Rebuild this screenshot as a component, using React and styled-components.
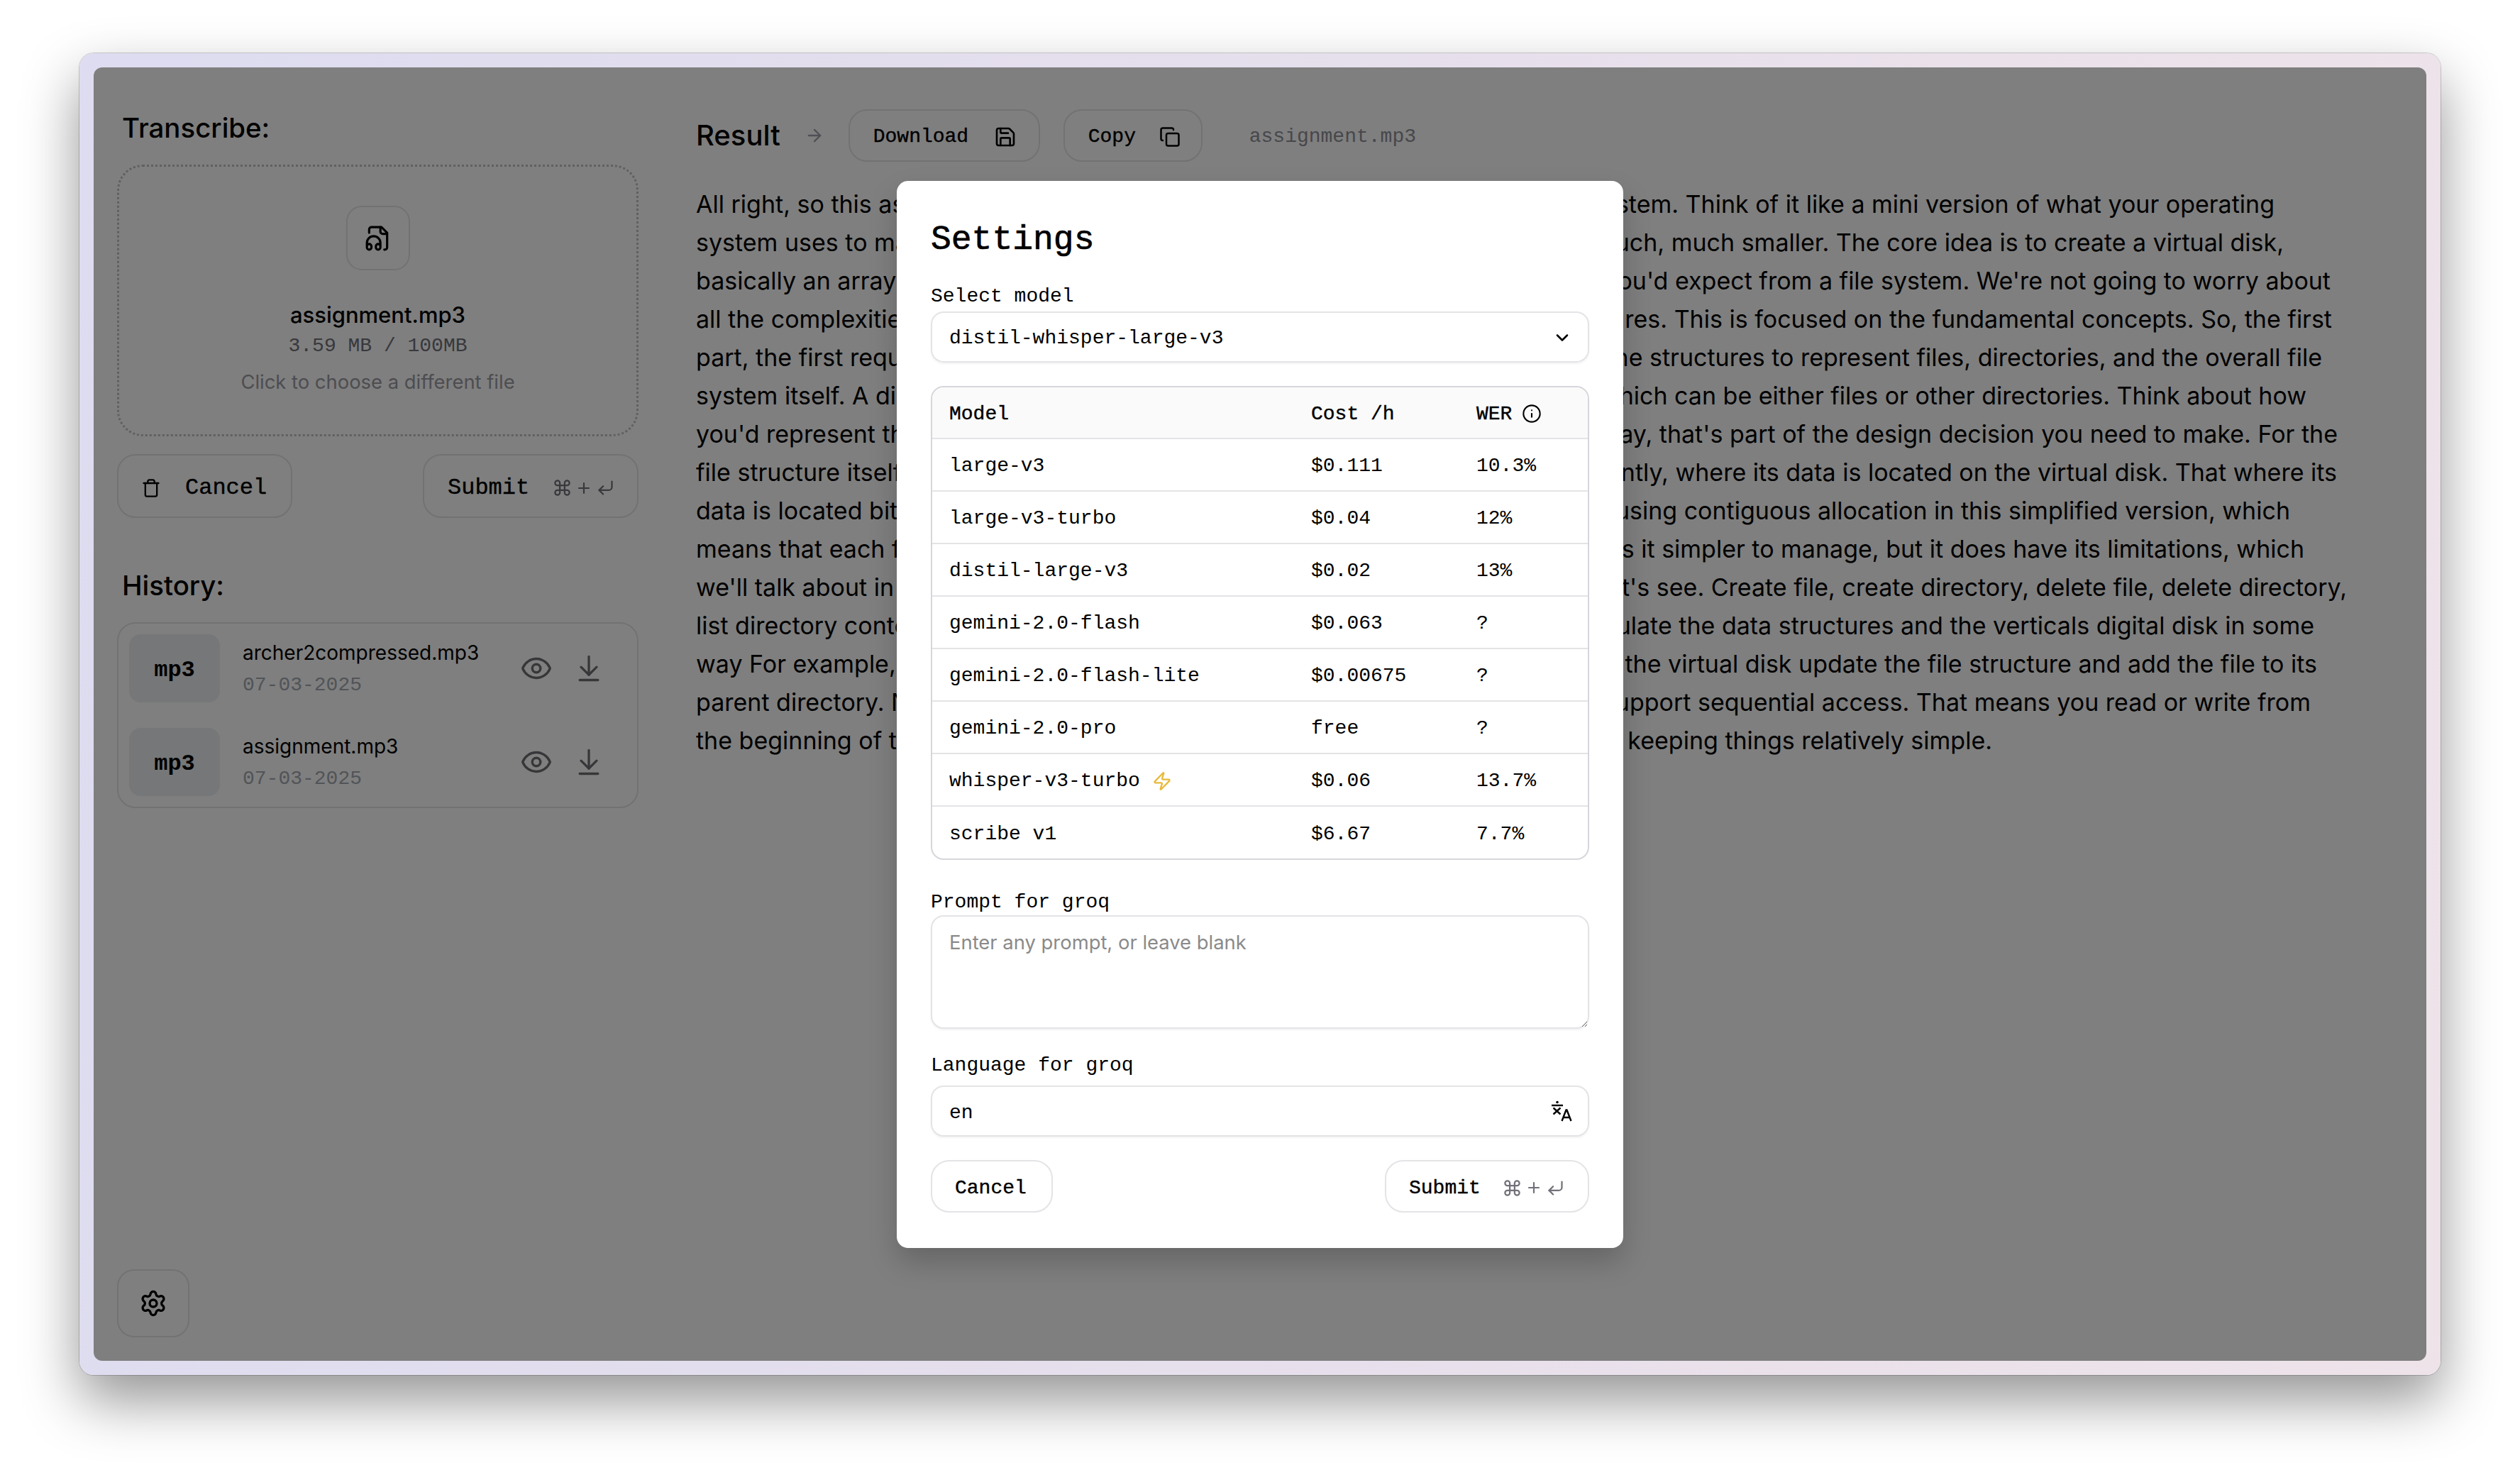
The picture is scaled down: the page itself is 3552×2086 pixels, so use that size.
import React from "react";
import styled, { createGlobalStyle } from "styled-components";
import {
  ArrowDownToLine,
  ArrowRight,
  ChevronDown,
  Command,
  Copy,
  CornerDownLeft,
  Eye,
  Info,
  Plus,
  Save,
  Settings as SettingsIcon,
  Trash,
  Zap,
} from "lucide-react";

const SANS = `Inter, "Liberation Sans", sans-serif`;
const MONO = `"Liberation Mono", "DejaVu Sans Mono", monospace`;

const GlobalStyle = createGlobalStyle`
  html, body {
    margin: 0;
    background: #fff;
  }
  * {
    box-sizing: border-box;
  }
`;

const Page = styled.div`
  width: 3552px;
  height: 2086px;
  padding: 75px 112px 148px;
  overflow: hidden;
  background: #fff;
`;

const Frame = styled.div`
  height: 100%;
  padding: 20px;
  border-radius: 20px;
  background: linear-gradient(98deg, #dddcf0 0%, #e6dfec 50%, #eee3e9 100%);
  box-shadow: 0 0 0 1px rgba(0, 0, 0, 0.18), 0 36px 80px rgba(0, 0, 0, 0.42);
`;

const Shell = styled.div`
  position: relative;
  display: flex;
  height: 100%;
  overflow: hidden;
  border-radius: 12px;
  background: #fff;
  color: #000;
  font-family: ${SANS};
`;

const Sidebar = styled.aside`
  display: flex;
  flex-direction: column;
  flex: none;
  width: 800px;
  padding: 61px 32px 33px 33px;
`;

const Heading = styled.h2`
  margin: ${(p) => p.$margin || "0"};
  font-size: 38.4px;
  line-height: 48px;
  font-weight: 500;
`;

const DropZone = styled.div`
  display: flex;
  flex-direction: column;
  align-items: center;
  height: 383px;
  margin-top: 28px;
  padding-top: 55px;
  border: 3px dotted #c0c0c6;
  border-radius: 36px;
`;

const FileIconBox = styled.div`
  display: flex;
  align-items: center;
  justify-content: center;
  width: 90px;
  height: 91px;
  border: 2px solid #e4e4e7;
  border-radius: 22px;
`;

const FileName = styled.div`
  margin-top: 43px;
  font-size: 31px;
  line-height: 40px;
  font-weight: 500;
`;

const FileSize = styled.div`
  margin-top: 6px;
  color: #71717a;
  font-family: ${MONO};
  font-size: 28px;
  line-height: 36px;
`;

const Hint = styled.div`
  margin-top: 14px;
  color: #9a9aa2;
  font-size: 27.4px;
  line-height: 36px;
`;

const Actions = styled.div`
  display: flex;
  justify-content: space-between;
  margin-top: 25px;
`;

const Button = styled.div`
  display: flex;
  align-items: center;
  width: ${(p) => p.$width}px;
  height: ${(p) => p.$height || 74}px;
  padding-top: ${(p) => p.$top || 5}px;
  padding-left: ${(p) => p.$pad || 33}px;
  gap: ${(p) => p.$gap || 0}px;
  border: 2px solid #e4e4e7;
  border-radius: 26px;
  background: #fff;
  font-family: ${MONO};
  font-size: ${(p) => (p.$large ? 32 : 28)}px;
  -webkit-text-stroke: 0.4px currentColor;
  white-space: nowrap;
`;

const CopyButton = styled(Button)`
  margin-left: 33px;
`;

const Keys = styled.span`
  display: flex;
  align-items: center;
  gap: 5px;
  margin-left: ${(p) => p.$left}px;
  color: #71717a;
`;

const HistoryBox = styled.div`
  display: flex;
  flex-direction: column;
  gap: 36px;
  margin-top: 28px;
  padding: 15px;
  border: 2px solid #e4e4e7;
  border-radius: 26px;
`;

const HistoryRow = styled.div`
  display: flex;
  align-items: center;
  gap: 32px;
`;

const ExtTile = styled.div`
  display: flex;
  align-items: center;
  justify-content: center;
  flex: none;
  width: 128px;
  height: 96px;
  padding-top: 4px;
  border-radius: 16px;
  background: #eceef1;
  font-family: ${MONO};
  font-size: 32px;
  font-weight: 700;
`;

const HistoryText = styled.div`
  flex: 1;
  min-width: 0;
  padding-top: 2px;
`;

const HistoryName = styled.div`
  font-size: 28px;
  line-height: 38px;
`;

const HistoryDate = styled.div`
  margin-top: 8px;
  color: #a3a8b0;
  font-family: ${MONO};
  font-size: 28px;
  line-height: 38px;
`;

const RowIcons = styled.div`
  display: flex;
  align-items: center;
  gap: 29px;
  padding-right: 31px;
  color: #6f6f74;
`;

const GearButton = styled.div`
  display: flex;
  align-items: center;
  justify-content: center;
  width: 102px;
  height: 96px;
  margin-top: auto;
  border: 2px solid #e4e4e7;
  border-radius: 24px;
`;

const Main = styled.main`
  flex: 1;
  min-width: 0;
  padding: 59px 0 0 49px;
`;

const ResultBar = styled.div`
  display: flex;
  align-items: center;
  height: 74px;
`;

const ResultTitle = styled.h2`
  margin: 0;
  font-size: 40px;
  line-height: 48px;
  font-weight: 500;
`;

const Arrow = styled.span`
  display: flex;
  margin: 0 34px 0 34px;
  color: #a1a1aa;
`;

const BarFile = styled.span`
  margin-left: 66px;
  padding-top: 3px;
  color: #8f8f96;
  font-family: ${MONO};
  font-size: 28px;
`;

const Transcript = styled.div`
  margin-top: 33px;
  font-size: 34px;
  line-height: 54px;
`;

const TranscriptLine = styled.div`
  display: flex;
  width: ${(p) => p.$width}px;
  white-space: pre;
`;

const LineStart = styled.span`
  flex: 1;
  min-width: 0;
  overflow: hidden;
`;

const LineEnd = styled.span`
  flex: none;
`;

const Overlay = styled.div`
  position: absolute;
  inset: 0;
  display: flex;
  align-items: center;
  justify-content: center;
  background: rgba(0, 0, 0, 0.5);
`;

const Modal = styled.div`
  display: flex;
  flex-direction: column;
  width: 1024px;
  height: 1504px;
  padding: 48px;
  border-radius: 16px;
  background: #fff;
  box-shadow: 0 20px 40px rgba(0, 0, 0, 0.2);
  font-family: ${MONO};
  font-size: 28px;
`;

const ModalTitle = styled.h2`
  margin: 2px 0 0;
  font-size: 48px;
  line-height: 66px;
  font-weight: 400;
  -webkit-text-stroke: 0.7px currentColor;
`;

const FieldLabel = styled.div`
  height: 34px;
  margin-top: ${(p) => p.$top}px;
  margin-bottom: ${(p) => p.$bottom}px;
  padding-top: 2px;
  line-height: 34px;
`;

const SelectBox = styled.div`
  display: flex;
  align-items: center;
  justify-content: space-between;
  flex: none;
  height: 72px;
  padding: 3px 22px 0 24px;
  border: 2px solid #e4e4e7;
  border-radius: 18px;
  box-shadow: 0 2px 3px rgba(0, 0, 0, 0.05);
`;

const TableWrap = styled.div`
  flex: none;
  margin-top: 33px;
  overflow: hidden;
  border: 2px solid #d6d6dc;
  border-radius: 18px;
`;

const Table = styled.table`
  width: 100%;
  table-layout: fixed;
  border-collapse: collapse;
  font-size: 28px;
`;

const HeadRow = styled.tr`
  height: 72px;
  background: #fafafa;
`;

const BodyRow = styled.tr`
  height: 74px;
  border-top: 2px solid #e4e4e7;
`;

const Cell = styled.td`
  padding: 4px 0 0 24px;
  font-weight: 400;
  text-align: left;
  white-space: nowrap;
`;

const HeadCell = styled(Cell).attrs({ as: "th" })`
  -webkit-text-stroke: 0.4px currentColor;
`;

const WithIcon = styled.span`
  display: inline-flex;
  align-items: center;
  gap: ${(p) => p.$gap}px;
  vertical-align: middle;
`;

const PromptArea = styled.textarea`
  display: block;
  flex: none;
  width: 100%;
  height: 160px;
  padding: 18px 24px;
  border: 2px solid #e4e4e7;
  border-radius: 18px;
  outline: none;
  box-shadow: 0 2px 3px rgba(0, 0, 0, 0.05);
  font-family: ${SANS};
  font-size: 27.4px;
  line-height: 36px;
  resize: vertical;

  &::placeholder {
    color: #8a8a8a;
    opacity: 1;
  }
`;

const LanguageBox = styled.div`
  display: flex;
  align-items: center;
  justify-content: space-between;
  flex: none;
  height: 72px;
  padding: 0 22px 0 24px;
  border: 2px solid #e4e4e7;
  border-radius: 18px;
  box-shadow: 0 2px 3px rgba(0, 0, 0, 0.05);
`;

const LanguageValue = styled.span`
  padding-top: 6px;
`;

const Footer = styled.div`
  display: flex;
  justify-content: space-between;
  margin-top: 33px;
`;

const FileAudioIcon = () => (
  <svg width="38" height="38" viewBox="0 0 24 24" fill="none" stroke="currentColor" strokeWidth="2" strokeLinecap="round" strokeLinejoin="round">
    <path d="M17.5 22h.5a2 2 0 0 0 2-2V7l-5-5H6a2 2 0 0 0-2 2v3" />
    <path d="M14 2v4a2 2 0 0 0 2 2h4" />
    <path d="M2 19a2 2 0 1 1 4 0v1a2 2 0 1 1-4 0v-4a6 6 0 0 1 12 0v4a2 2 0 1 1-4 0v-1a2 2 0 1 1 4 0" />
  </svg>
);

const TranslateIcon = () => (
  <svg width="30" height="30" viewBox="0 0 30 30" fill="none" stroke="currentColor" strokeWidth="2.4">
    <circle cx="9" cy="2.5" r="1.8" fill="currentColor" stroke="none" />
    <path d="M1 7h16" />
    <path d="M3.5 10.5l10 9M13.5 10.5l-10 9" />
    <path d="M15.5 29L21.5 13.5h1L28.5 29M18 24h8" />
  </svg>
);

const Shortcut = ({ left }) => (
  <Keys $left={left}>
    <Command size={27} strokeWidth={2} />
    <Plus size={24} strokeWidth={2.2} />
    <CornerDownLeft size={27} strokeWidth={2} />
  </Keys>
);

const history = ["archer2compressed.mp3", "assignment.mp3"];

const lines = [
  [3206, "All right, so this assignment is asking you to build a simple file", "system. Think of it like a mini version of what your operating"],
  [3219, "system uses to manage files, but", "much, much smaller. The core idea is to create a virtual disk,"],
  [3285, "basically an array of bytes, and give it the basic operations", "you'd expect from a file system. We're not going to worry about"],
  [3287, "all the complexities of real file systems or advanced", "features. This is focused on the fundamental concepts. So, the first"],
  [3273, "part, the first requirement is that you design", "the structures to represent files, directories, and the overall file"],
  [3251, "system itself. A directory holds a list of entries", "which can be either files or other directories. Think about how"],
  [3295, "you'd represent this in memory. There's no one right", "way, that's part of the design decision you need to make. For the"],
  [3294, "file structure itself, each file has to record", "importantly, where its data is located on the virtual disk. That where its"],
  [3228, "data is located bit matters because we are", "are using contiguous allocation in this simplified version, which"],
  [3248, "means that each file sits in one continuous block", "makes it simpler to manage, but it does have its limitations, which"],
  [3308, "we'll talk about in a moment. Now the operations", "let's see. Create file, create directory, delete file, delete directory,"],
  [3262, "list directory contents. Each of these has to", "manipulate the data structures and the verticals digital disk in some"],
  [3266, "way For example, create file has to find space", "on the virtual disk update the file structure and add the file to its"],
  [3257, "parent directory. Next, reading and writing files", "support sequential access. That means you read or write from"],
  [2808, "the beginning of the file to the end, with no seeking,", "keeping things relatively simple."],
];

const models = [
  ["large-v3", "$0.111", "10.3%"],
  ["large-v3-turbo", "$0.04", "12%"],
  ["distil-large-v3", "$0.02", "13%"],
  ["gemini-2.0-flash", "$0.063", "?"],
  ["gemini-2.0-flash-lite", "$0.00675", "?"],
  ["gemini-2.0-pro", "free", "?"],
  ["whisper-v3-turbo", "$0.06", "13.7%", true],
  ["scribe v1", "$6.67", "7.7%"],
];

export default function App() {
  return (
    <Page>
      <GlobalStyle />
      <Frame>
        <Shell>
          <Sidebar>
            <Heading $margin="0 0 0 7px">Transcribe:</Heading>
            <DropZone>
              <FileIconBox>
                <FileAudioIcon />
              </FileIconBox>
              <FileName>assignment.mp3</FileName>
              <FileSize>3.59 MB / 100MB</FileSize>
              <Hint>Click to choose a different file</Hint>
            </DropZone>
            <Actions>
              <Button $large $width={247} $height={90} $pad={32} $gap={34}>
                <Trash size={28} strokeWidth={2} />
                Cancel
              </Button>
              <Button $large $width={304} $height={90} $pad={33}>
                Submit
                <Shortcut left={33} />
              </Button>
            </Actions>
            <Heading $margin="71px 0 0 7px">History:</Heading>
            <HistoryBox>
              {history.map((name) => (
                <HistoryRow key={name}>
                  <ExtTile>mp3</ExtTile>
                  <HistoryText>
                    <HistoryName>{name}</HistoryName>
                    <HistoryDate>07-03-2025</HistoryDate>
                  </HistoryText>
                  <RowIcons>
                    <Eye size={46} strokeWidth={1.8} />
                    <ArrowDownToLine size={44} strokeWidth={1.8} />
                  </RowIcons>
                </HistoryRow>
              ))}
            </HistoryBox>
            <GearButton>
              <SettingsIcon size={40} strokeWidth={2} />
            </GearButton>
          </Sidebar>
          <Main>
            <ResultBar>
              <ResultTitle>Result</ResultTitle>
              <Arrow>
                <ArrowRight size={28} strokeWidth={2} />
              </Arrow>
              <Button $top={3} $width={270} $gap={36}>
                Download
                <Save size={32} strokeWidth={2} />
              </Button>
              <CopyButton $top={3} $width={196} $gap={33}>
                Copy
                <Copy size={30} strokeWidth={2} />
              </CopyButton>
              <BarFile>assignment.mp3</BarFile>
            </ResultBar>
            <Transcript>
              {lines.map(([end, start, rest]) => (
                <TranscriptLine key={end} $width={end - 981}>
                  <LineStart>{start}</LineStart>
                  <LineEnd>{rest}</LineEnd>
                </TranscriptLine>
              ))}
            </Transcript>
          </Main>
          <Overlay>
            <Modal>
              <ModalTitle>Settings</ModalTitle>
              <FieldLabel $top={28} $bottom={6}>Select model</FieldLabel>
              <SelectBox>
                distil-whisper-large-v3
                <ChevronDown size={28} strokeWidth={2.2} />
              </SelectBox>
              <TableWrap>
                <Table>
                  <colgroup>
                    <col style={{ width: 510 }} />
                    <col style={{ width: 233 }} />
                    <col />
                  </colgroup>
                  <thead>
                    <HeadRow>
                      <HeadCell>Model</HeadCell>
                      <HeadCell>Cost /h</HeadCell>
                      <HeadCell>
                        <WithIcon $gap={14}>
                          WER
                          <Info size={28} strokeWidth={1.8} />
                        </WithIcon>
                      </HeadCell>
                    </HeadRow>
                  </thead>
                  <tbody>
                    {models.map(([name, cost, wer, fast]) => (
                      <BodyRow key={name}>
                        <Cell>
                          <WithIcon $gap={17}>
                            {name}
                            {fast && <Zap size={28} strokeWidth={2} color="#e8b93c" />}
                          </WithIcon>
                        </Cell>
                        <Cell>{cost}</Cell>
                        <Cell>{wer}</Cell>
                      </BodyRow>
                    ))}
                  </tbody>
                </Table>
              </TableWrap>
              <FieldLabel $top={41} $bottom={3}>Prompt for groq</FieldLabel>
              <PromptArea placeholder="Enter any prompt, or leave blank" readOnly />
              <FieldLabel $top={33} $bottom={13}>Language for groq</FieldLabel>
              <LanguageBox>
                <LanguageValue>en</LanguageValue>
                <TranslateIcon />
              </LanguageBox>
              <Footer>
                <Button $width={172} $pad={32}>Cancel</Button>
                <Button $width={288} $pad={32}>
                  Submit
                  <Shortcut left={31} />
                </Button>
              </Footer>
            </Modal>
          </Overlay>
        </Shell>
      </Frame>
    </Page>
  );
}
